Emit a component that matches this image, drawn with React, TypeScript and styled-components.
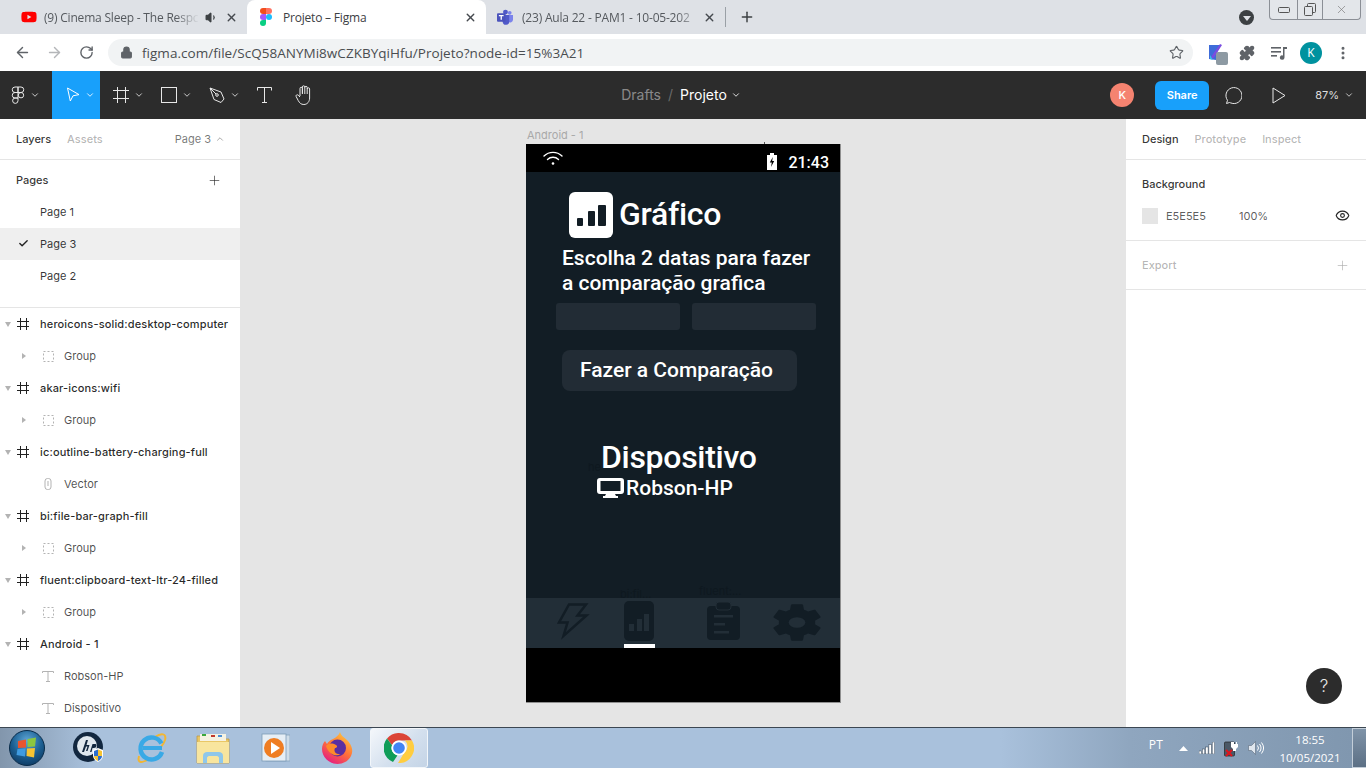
import React, { FC } from 'react';
import styled, { createGlobalStyle } from 'styled-components';
import { FaYoutube } from 'react-icons/fa';
import { ArrowLeft, ArrowRight, RotateCw, Lock, Star, Puzzle, Plus, X, Volume1, ChevronDown, ChevronUp, MoreVertical, Check, Eye } from 'lucide-react';

const GlobalStyle = createGlobalStyle`
  html, body { margin: 0; padding: 0; height: 100%; overflow: hidden; background: #fff; }
  #root { height: 100%; }
  * { box-sizing: border-box; }
`;

const Page = styled.div`
  width: 1366px;
  height: 768px;
  display: flex;
  flex-direction: column;
  position: relative;
  overflow: hidden;
  font-family: Inter, "Liberation Sans", sans-serif;
`;

/* ---------- browser chrome ---------- */

const TabStrip = styled.div`
  height: 34px;
  flex: none;
  display: flex;
  align-items: flex-end;
  background: #dee1e6;
  padding-left: 8px;
  position: relative;
`;

const Tab = styled.div<{ $w: number; $active?: boolean }>`
  width: ${(p) => p.$w}px;
  height: 34px;
  flex: none;
  display: flex;
  align-items: center;
  padding: 0 9px 0 13px;
  background: ${(p) => (p.$active ? '#fff' : 'transparent')};
  border-radius: 8px 8px 0 0;
  color: #45494e;
  font: 12px "Open Sans", "Liberation Sans", sans-serif;
`;

const Favicon = styled.span<{ $shift?: number }>`
  width: 16px;
  flex: none;
  display: flex;
  line-height: 0;
  margin-left: ${(p) => p.$shift ?? 0}px;
  margin-right: ${(p) => -(p.$shift ?? 0)}px;
`;

const TabTitle = styled.span<{ $mute?: boolean; $fade?: boolean }>`
  flex: 1;
  margin-left: 7px;
  white-space: nowrap;
  overflow: hidden;
  letter-spacing: -0.2px;
  color: ${(p) => (p.$mute ? '#55595e' : '#3c4043')};
  ${(p) => (p.$fade ? 'mask-image: linear-gradient(90deg, #000 85%, transparent 100%);' : '')}
`;

const TabAudio = styled(Volume1)`
  margin: 0 7px 0 6px;
  flex: none;
`;

const TabSep = styled.div`
  width: 1px;
  height: 20px;
  background: #9aa0a6;
  margin: 0 0 7px 0;
`;

const NewTab = styled.div`
  width: 42px;
  height: 34px;
  display: flex;
  align-items: center;
  justify-content: center;
  color: #3c4043;
`;

const Spacer = styled.div`
  flex: 1;
`;

const ProfileDot = styled.div`
  width: 15px;
  height: 15px;
  border-radius: 50%;
  background: #3c4043;
  margin: 0 15px 9px 0;
  display: flex;
  align-items: center;
  justify-content: center;
  &::after {
    content: '';
    border: 4px solid transparent;
    border-top: 5px solid #dee1e6;
    margin-top: 5px;
  }
`;

const WinButtons = styled.div`
  align-self: flex-start;
  width: 92px;
  height: 20px;
  margin-right: 5px;
  border: 1px solid #8b8f96;
  border-top: none;
  border-radius: 0 0 4px 4px;
  display: grid;
  grid-template-columns: 27px 25px 1fr;
  background: #e3e6ea;
`;

const WinBtn = styled.div`
  display: flex;
  align-items: center;
  justify-content: center;
  border-left: 1px solid #8b8f96;
  &:first-child {
    border-left: none;
  }
`;

const AddressBar = styled.div`
  height: 37px;
  flex: none;
  background: #fff;
  display: flex;
  align-items: center;
  color: #5f6368;
`;

const NavButton = styled.div<{ $w: number; $off?: boolean; $gap?: number }>`
  width: ${(p) => p.$w}px;
  flex: none;
  margin-left: ${(p) => p.$gap ?? 0}px;
  display: flex;
  align-items: center;
  justify-content: center;
  color: ${(p) => (p.$off ? '#b4b6b9' : '#5f6368')};
`;

const Omnibox = styled.div`
  width: 1085px;
  height: 27px;
  flex: none;
  padding: 0 9px 0 12px;
  border-radius: 14px;
  background: #f1f3f4;
  display: flex;
  align-items: center;
`;

const Url = styled.span`
  flex: 1;
  margin-left: 9px;
  font: 13.5px "Open Sans", "Liberation Sans", sans-serif;
  letter-spacing: 0.03px;
  color: #4a4d50;
`;

const ChromeAvatar = styled.div`
  width: 22px;
  height: 22px;
  border-radius: 50%;
  background: #00929f;
  color: #fff;
  display: flex;
  align-items: center;
  justify-content: center;
  font: 12px "Open Sans", sans-serif;
`;

/* ---------- figma toolbar ---------- */

const Toolbar = styled.div`
  height: 48px;
  flex: none;
  background: #2c2c2c;
  display: grid;
  grid-template-columns: 1fr auto 1fr;
  align-items: center;
  color: #fff;
`;

const ToolGroup = styled.div`
  display: flex;
  height: 48px;
`;

const Tool = styled.div<{ $w?: number; $pad?: number; $gap?: number; $active?: boolean }>`
  width: ${(p) => p.$w ?? 48}px;
  height: 48px;
  flex: none;
  display: flex;
  align-items: center;
  justify-content: center;
  gap: 5px;
  margin-left: ${(p) => p.$gap ?? 0}px;
  padding-left: ${(p) => p.$pad ?? 9}px;
  background: ${(p) => (p.$active ? '#18a0fb' : 'transparent')};
  color: #e8e8e8;
`;

const Crumbs = styled.div`
  display: flex;
  align-items: center;
  font-size: 14px;
  line-height: 16px;
  margin: -1px 4px 0 0;
`;

const CrumbFaint = styled.span`
  color: rgba(255, 255, 255, 0.45);
`;

const CrumbSlash = styled.span`
  color: rgba(255, 255, 255, 0.3);
  margin: 0 7px;
  font-size: 14px;
`;

const CrumbName = styled.span`
  color: #fff;
  margin-right: 4px;
`;

const ToolRight = styled.div`
  display: flex;
  align-items: center;
  justify-content: flex-end;
  height: 48px;
  padding-right: 12px;
`;

const UserDot = styled.div`
  width: 24px;
  height: 24px;
  border-radius: 50%;
  background: #f58370;
  color: #fff;
  font-size: 11px;
  font-weight: 500;
  display: flex;
  align-items: center;
  justify-content: center;
  margin-right: 21px;
`;

const ShareButton = styled.div`
  width: 54px;
  height: 29px;
  border-radius: 6px;
  background: #18a0fb;
  color: #fff;
  font-size: 11px;
  font-weight: 600;
  display: flex;
  align-items: center;
  justify-content: center;
  margin-right: 14px;
`;

const IconSlot = styled.div<{ $w: number }>`
  width: ${(p) => p.$w}px;
  display: flex;
  align-items: center;
  justify-content: center;
`;

const Zoom = styled.div`
  display: flex;
  align-items: center;
  gap: 5px;
  font-size: 11px;
  color: rgba(255, 255, 255, 0.85);
`;

/* ---------- main area ---------- */

const Main = styled.div`
  flex: 1;
  display: flex;
  min-height: 0;
`;

const Panel = styled.aside`
  width: 240px;
  flex: none;
  background: #fff;
  overflow: hidden;
  font-size: 11px;
  color: rgba(0, 0, 0, 0.8);
`;

const PanelTabs = styled.div`
  height: 41px;
  display: flex;
  align-items: center;
  padding: 0 16px;
  gap: 16px;
  border-bottom: 1px solid #e5e5e5;
`;

const PanelTab = styled.span<{ $on?: boolean }>`
  font-weight: 500;
  color: ${(p) => (p.$on ? 'rgba(0,0,0,0.8)' : 'rgba(0,0,0,0.3)')};
`;

const PageSwitch = styled.span`
  margin-left: auto;
  display: flex;
  align-items: center;
  gap: 4px;
  color: rgba(0, 0, 0, 0.55);
  margin-right: -1px;
`;

const PagesHead = styled.div`
  height: 36px;
  display: flex;
  align-items: center;
  justify-content: space-between;
  padding: 4px 18px 0 16px;
  font-weight: 500;
`;

const PagesList = styled.div`
  padding-bottom: 15px;
  border-bottom: 1px solid #e5e5e5;
`;

const PageRow = styled.div<{ $on?: boolean }>`
  height: 32px;
  display: flex;
  align-items: center;
  padding-left: 40px;
  position: relative;
  background: ${(p) => (p.$on ? '#efefef' : 'transparent')};
`;

const PageCheck = styled.span`
  position: absolute;
  left: 18px;
  top: 10px;
  line-height: 0;
`;

const LayerRow = styled.div<{ $child?: boolean }>`
  height: 32px;
  display: flex;
  align-items: center;
  white-space: nowrap;
  font-weight: ${(p) => (p.$child ? 400 : 500)};
  letter-spacing: ${(p) => (p.$child ? 0 : 0.15)}px;
  color: ${(p) => (p.$child ? 'rgba(0,0,0,0.7)' : 'rgba(0,0,0,0.85)')};
`;

const Caret = styled.span<{ $dir: 'down' | 'right' | 'none'; $indent?: boolean }>`
  width: 0;
  height: 0;
  flex: none;
  margin-left: ${(p) => (p.$indent ? '22px' : '5px')};
  border-style: solid;
  ${(p) =>
    p.$dir === 'down'
      ? 'border-width: 5px 3.5px 0 3.5px; border-color: #b3b3b3 transparent transparent transparent;'
      : p.$dir === 'right'
      ? 'border-width: 3.5px 0 3.5px 4px; border-color: transparent transparent transparent #b3b3b3;'
      : 'border-width: 0; border-color: transparent; margin-right: 4px;'}
`;

const LayerIcon = styled.span<{ $child?: boolean }>`
  width: 16px;
  height: 16px;
  flex: none;
  display: flex;
  align-items: center;
  justify-content: center;
  margin-left: ${(p) => (p.$child ? '14px' : '4px')};
  margin-right: ${(p) => (p.$child ? '8px' : '9px')};
`;

const Canvas = styled.main`
  flex: 1;
  background: #e5e5e5;
  padding: 9px 0 0 286px;
  min-width: 0;
  overflow: hidden;
`;

const FrameLabel = styled.div`
  height: 16px;
  padding-left: 1px;
  font-size: 11px;
  line-height: 14px;
  color: #a9a9a9;
`;

const Phone = styled.div`
  width: 315px;
  height: 559px;
  background: #000;
  position: relative;
  display: flex;
  flex-direction: column;
  border: 1px solid #8f8f8f;
  border-width: 0 1px 1px 0;
  font-family: Roboto, sans-serif;
  font-weight: 500;
  color: #fff;
`;

const FrameTick = styled.span`
  position: absolute;
  left: 238px;
  top: -2px;
  width: 1px;
  height: 2px;
  background: #555;
`;

const StatusBar = styled.div`
  height: 28px;
  flex: none;
  background: #000;
  display: flex;
  padding: 7px 11px 0 17px;
`;

const StatusBattery = styled.span`
  line-height: 0;
  margin-top: 2px;
`;

const StatusTime = styled.span`
  font-size: 16px;
  line-height: 24px;
  margin-left: 11px;
`;

const Screen = styled.div`
  height: 426px;
  flex: none;
  background: #121d25;
  display: flex;
  flex-direction: column;
`;

const TitleRow = styled.div`
  display: flex;
  align-items: center;
  margin: 20px 0 0 43px;
  gap: 6px;
`;

const Title = styled.h1`
  margin: 0;
  padding-bottom: 2px;
  font-size: 32px;
  font-weight: 500;
  line-height: 44px;
  letter-spacing: -0.3px;
`;

const Lead = styled.p`
  margin: 8px 0 0 36px;
  font-size: 21px;
  line-height: 25px;
`;

const Inputs = styled.div`
  display: flex;
  gap: 12px;
  margin: 7px 0 0 30px;
`;

const DateInput = styled.div`
  width: 124px;
  height: 27px;
  border-radius: 3px;
  background: #222c35;
`;

const CompareButton = styled.div`
  width: 235px;
  height: 41px;
  margin: 20px 0 0 36px;
  padding-left: 18px;
  border-radius: 8px;
  background: #222c35;
  font-size: 21px;
  line-height: 40px;
  white-space: nowrap;
`;

const DeviceTitle = styled.div`
  margin: 46px 0 0 75px;
  font-size: 32px;
  line-height: 40px;
  letter-spacing: -0.3px;
`;

const DeviceRow = styled.div`
  display: flex;
  align-items: center;
  margin: 1px 0 0 71px;
  gap: 2px;
  font-size: 21px;
  line-height: 20px;
  height: 20px;
`;

const GhostLabel = styled.span<{ $x: number; $y: number }>`
  position: absolute;
  left: ${(p) => p.$x}px;
  top: ${(p) => p.$y}px;
  font-family: Inter, sans-serif;
  font-size: 11px;
  font-weight: 400;
  line-height: 12px;
  color: #0e181f;
`;

const BottomNav = styled.nav`
  height: 50px;
  flex: none;
  background: #222e37;
  position: relative;
  display: grid;
  grid-template-columns: 97px 83px 67px 1fr;
`;

const NavItem = styled.div<{ $pad: number; $top: number }>`
  padding-left: ${(p) => p.$pad}px;
  padding-top: ${(p) => p.$top}px;
  line-height: 0;
`;

const NavMarker = styled.div`
  position: absolute;
  left: 98px;
  bottom: 0;
  width: 31px;
  height: 4px;
  background: #fff;
`;

const DesignRow = styled.div`
  height: 49px;
  display: flex;
  align-items: center;
  padding: 0 16px;
`;

const Section = styled.div`
  padding: 0;
  border-bottom: 1px solid #e5e5e5;
`;

const SectionTitle = styled.div<{ $faint?: boolean }>`
  font-weight: 500;
  padding: 0 16px;
  color: ${(p) => (p.$faint ? 'rgba(0,0,0,0.3)' : 'rgba(0,0,0,0.8)')};
`;

const BackgroundBlock = styled.div`
  padding-top: 17px;
`;

const ExportRow = styled.div`
  height: 48px;
  display: flex;
  align-items: center;
  justify-content: space-between;
  padding-right: 16px;
`;

const Swatch = styled.span`
  width: 16px;
  height: 16px;
  background: #e5e5e5;
  margin-right: 8px;
`;

const HexValue = styled.span`
  width: 73px;
  color: rgba(0, 0, 0, 0.65);
`;

const Opacity = styled.span`
  flex: 1;
  color: rgba(0, 0, 0, 0.65);
`;

const HelpButton = styled.div`
  position: absolute;
  left: 1306px;
  top: 668px;
  width: 36px;
  height: 36px;
  border-radius: 50%;
  background: #2c2c2c;
  color: #e8e8e8;
  font-size: 17px;
  font-weight: 300;
  display: flex;
  align-items: center;
  justify-content: center;
`;

/* ---------- windows taskbar ---------- */

const Taskbar = styled.footer`
  height: 41px;
  flex: none;
  display: flex;
  align-items: center;
  border-top: 1px solid #3c4752;
  background: linear-gradient(90deg, #8296ac 0, #a9c1dc 90px, #a9c1dc 1000px, #8fa6bf 1130px, #7f96ae 1366px);
`;

const TaskSlot = styled.div<{ $on?: boolean }>`
  width: 62px;
  height: 40px;
  flex: none;
  display: flex;
  align-items: center;
  justify-content: center;
  line-height: 0;
  ${(p) =>
    p.$on
      ? `width: 58px; margin-left: 2px; border: 1px solid #f2f6fa; border-radius: 3px;
         background: linear-gradient(135deg, #f4f7fb 0, #d4e0ee 55%, #c4d4e6 100%);`
      : ''}
`;

const TaskFirst = styled(TaskSlot)`
  margin-left: -4px;
`;

const Tray = styled.div`
  margin-left: auto;
  display: flex;
  align-items: center;
  height: 40px;
  color: #fff;
  font: 11.5px "Open Sans", "Liberation Sans", sans-serif;
`;

const TrayItem = styled.div<{ $w: number }>`
  width: ${(p) => p.$w}px;
  display: flex;
  align-items: center;
  justify-content: center;
  line-height: 0;
`;

const Lang = styled.span`
  line-height: 16px;
  margin-top: -6px;
  font-size: 12px;
  letter-spacing: 0.3px;
`;

const Clock = styled.div`
  width: 84px;
  text-align: center;
  line-height: 18px;
  padding-top: 1px;
`;

const ShowDesktop = styled.div`
  width: 14px;
  height: 40px;
  border: 1px solid #c3ced9;
  border-right: none;
  background: linear-gradient(180deg, #7f93a8, #5c7085);
`;

/* ---------- icons ---------- */

const FigmaColor = () => (
  <svg width="12" height="18" viewBox="0 0 12 18">
    <path d="M0 3a3 3 0 0 1 3-3h3v6H3a3 3 0 0 1-3-3z" fill="#f24e1e" />
    <path d="M6 0h3a3 3 0 0 1 0 6H6z" fill="#ff7262" />
    <path d="M0 9a3 3 0 0 1 3-3h3v6H3a3 3 0 0 1-3-3z" fill="#a259ff" />
    <circle cx="9" cy="9" r="3" fill="#1abcfe" />
    <path d="M0 15a3 3 0 0 1 3-3h3v3a3 3 0 0 1-6 0z" fill="#0acf83" />
  </svg>
);

const TeamsIcon = () => (
  <svg width="17" height="16" viewBox="0 0 17 16">
    <circle cx="13.5" cy="3.5" r="2" fill="#7b83eb" />
    <circle cx="9" cy="2.8" r="2.6" fill="#5059c9" />
    <path d="M11 6h6v5a3 3 0 0 1-5 2z" fill="#7b83eb" />
    <path d="M5 6h8v6.5a3.5 3.5 0 0 1-7 .5z" fill="#5059c9" />
    <rect x="0" y="4" width="9" height="9" rx="1" fill="#4b53bc" />
    <path d="M2 6h5v1.2H5.2V11H3.8V7.2H2z" fill="#fff" />
  </svg>
);

const FigmaMono = () => (
  <svg width="14" height="18" viewBox="0 0 14 18" fill="none" stroke="#e8e8e8" strokeWidth="1">
    <path d="M7 1H4a2.7 2.7 0 0 0 0 5.5h3zM7 1h3a2.7 2.7 0 0 1 0 5.5H7zM7 6.5H4a2.7 2.7 0 0 0 0 5.5h3z" />
    <circle cx="10" cy="9.2" r="2.7" />
    <path d="M7 12H4a2.7 2.7 0 1 0 3 2.7z" />
  </svg>
);

const MoveIcon = () => (
  <svg width="14" height="16" viewBox="0 0 14 16" fill="none" stroke="#fff" strokeWidth="1">
    <path d="M1.5 1l2.8 13 2.7-5.2 6-1.2z" />
  </svg>
);

const FrameIcon = () => (
  <svg width="16" height="16" viewBox="0 0 16 16" fill="none" stroke="#e8e8e8" strokeWidth="1">
    <path d="M4.5 0v16M12.5 0v16M0 3.5h16M0 11.5h16" />
  </svg>
);

const RectIcon = () => (
  <svg width="16" height="16" viewBox="0 0 16 16" fill="none" stroke="#e8e8e8" strokeWidth="1">
    <rect x="0.5" y="0.5" width="15" height="15" />
  </svg>
);

const PenIcon = () => (
  <svg width="16" height="17" viewBox="0 0 16 17" fill="none" stroke="#e8e8e8" strokeWidth="1">
    <path d="M1 1l11 4 3 7-3 3.5-7-3zM1 1l6 6" />
    <circle cx="8" cy="8" r="1.3" />
  </svg>
);

const TextIcon = () => (
  <svg width="15" height="16" viewBox="0 0 15 16" fill="none" stroke="#e8e8e8" strokeWidth="1">
    <path d="M0.5 3.5V0.5h14v3M7.5 0.5v15M5 15.5h5" />
  </svg>
);

const HandIcon = () => (
  <svg width="19" height="20" viewBox="0 0 19 20" fill="none" stroke="#e8e8e8" strokeWidth="1">
    <path d="M5 11V3.5a1.2 1.2 0 0 1 2.4 0V9m0-.5V2a1.2 1.2 0 0 1 2.4 0v7m0-6.5a1.2 1.2 0 0 1 2.4 0V9m0-5a1.2 1.2 0 0 1 2.4 0v9c0 3.5-2.2 6.5-5.7 6.5-3 0-4.3-1.5-5.7-4L1.2 11.7c-.8-1.5 1-2.6 2-1.5L5 12" />
  </svg>
);

const CommentIcon = () => (
  <svg width="18" height="19" viewBox="0 0 18 19" fill="none" stroke="#e8e8e8" strokeWidth="1">
    <path d="M2.5 17.5l1-3.2A8 8 0 1 1 7 17a8 8 0 0 1-1.5-.5z" />
  </svg>
);

const PlayIcon = () => (
  <svg width="14" height="17" viewBox="0 0 14 17" fill="none" stroke="#e8e8e8" strokeWidth="1">
    <path d="M1 1l12 7.5L1 16z" />
  </svg>
);

const ExtIcon = () => (
  <svg width="22" height="24" viewBox="0 0 22 24">
    <path d="M3 4h11l-2 3-2 12-7-1z" fill="#3e6cd9" />
    <path d="M5 16l9-13 2 1-9 14z" fill="#7a4de0" />
    <path d="M4 14l3 5-3-1z" fill="#35c0e8" />
    <rect x="10" y="11" width="12" height="13" rx="2" fill="#8d9aa3" />
  </svg>
);

const QueueIcon = () => (
  <svg width="16" height="14" viewBox="0 0 16 14" fill="#5f6368">
    <rect x="0" y="1" width="10" height="1.6" />
    <rect x="0" y="5" width="10" height="1.6" />
    <rect x="0" y="9" width="6" height="1.6" />
    <path d="M12 1h4v2h-2.5v8.5a2.3 2.3 0 1 1-1.5-2.1z" />
  </svg>
);

const MiniFrame = () => (
  <svg width="12" height="12" viewBox="0 0 12 12" fill="none" stroke="#222" strokeWidth="1">
    <path d="M3.5 0v12M9.5 0v12M0 3.5h12M0 8.5h12" />
  </svg>
);

const GroupGlyph = () => (
  <svg width="11" height="11" viewBox="0 0 11 11" fill="none" stroke="#b3b3b3" strokeWidth="1" strokeDasharray="2 2">
    <rect x="0.5" y="0.5" width="10" height="10" />
  </svg>
);

const VectorGlyph = () => (
  <svg width="8" height="12" viewBox="0 0 8 12" fill="none" stroke="#b3b3b3" strokeWidth="1">
    <rect x="1" y="0.5" width="6" height="11" rx="2.5" />
    <path d="M4 3v5" />
  </svg>
);

const TextGlyph = () => (
  <svg width="12" height="11" viewBox="0 0 12 11" fill="none" stroke="#b3b3b3" strokeWidth="1">
    <path d="M0.5 2V0.5h11V2M6 0.5v10M4 10.5h4" />
  </svg>
);

const WifiIcon = () => (
  <svg width="20" height="15" viewBox="0 0 20 15" fill="none" stroke="#fff" strokeWidth="1.4" strokeLinecap="round">
    <path d="M1 5a13 13 0 0 1 18 0M4.5 8.5a8 8 0 0 1 11 0" />
    <circle cx="10" cy="12.5" r="1.3" fill="#fff" stroke="none" />
  </svg>
);

const BatteryIcon = () => (
  <svg width="10" height="17" viewBox="0 0 10 17">
    <path d="M3 0h4v2h3v15H0V2h3z" fill="#fff" />
    <path d="M5.8 4L2.8 9.5h2L4 14l3.2-6h-2z" fill="#000" />
  </svg>
);

const ChartLogo = () => (
  <svg width="44" height="46" viewBox="0 0 44 46">
    <rect width="44" height="46" rx="6" fill="#fff" />
    <rect x="8" y="26" width="6" height="8" rx="1" fill="#121d25" />
    <rect x="19" y="19" width="7" height="15" rx="1" fill="#121d25" />
    <rect x="29" y="13" width="8" height="21" rx="1" fill="#121d25" />
  </svg>
);

const DesktopIcon = () => (
  <svg width="27" height="20" viewBox="0 0 27 20">
    <path fillRule="evenodd" d="M3 0h21a3 3 0 0 1 3 3v10a3 3 0 0 1-3 3H3a3 3 0 0 1-3-3V3a3 3 0 0 1 3-3zm.5 3v10h20V3z" fill="#fff" />
    <path d="M9 16h9l1 2h2v2H6v-2h2z" fill="#fff" />
  </svg>
);

const BoltNav = () => (
  <svg width="34" height="38" viewBox="0 0 34 38" fill="none" stroke="#121d25" strokeWidth="2.5" strokeLinejoin="miter">
    <path d="M13 1.5h17L21.5 12.5h9L7.5 33 11.5 19.5H3z" />
  </svg>
);

const ChartNav = () => (
  <svg width="30" height="40" viewBox="0 0 30 40">
    <rect width="30" height="40" rx="5" fill="#121d25" />
    <rect x="5" y="23" width="5" height="7" fill="#222e37" />
    <rect x="13" y="18" width="5" height="12" fill="#222e37" />
    <rect x="20" y="13" width="5" height="17" fill="#222e37" />
  </svg>
);

const ClipNav = () => (
  <svg width="33" height="38" viewBox="0 0 33 38">
    <rect y="4" width="33" height="34" rx="4" fill="#121d25" />
    <rect x="9" y="0" width="15" height="8" rx="3" fill="#121d25" stroke="#222e37" strokeWidth="1" />
    <rect x="7" y="13" width="19" height="2.5" fill="#222e37" />
    <rect x="7" y="21" width="11" height="2.5" fill="#222e37" />
    <rect x="7" y="29" width="15" height="2.5" fill="#222e37" />
  </svg>
);

const GearNav = () => (
  <svg width="48" height="37" viewBox="2.5 2.3 19 19.4" preserveAspectRatio="none">
    <path
      fill="#121d25"
      d="M19.14 12.94c.04-.3.06-.61.06-.94 0-.32-.02-.64-.07-.94l2.03-1.58c.18-.14.23-.41.12-.61l-1.92-3.32c-.12-.22-.37-.29-.59-.22l-2.39.96c-.5-.38-1.03-.7-1.62-.94l-.36-2.54c-.04-.24-.24-.41-.48-.41h-3.84c-.24 0-.43.17-.47.41l-.36 2.54c-.59.24-1.13.57-1.62.94l-2.39-.96c-.22-.08-.47 0-.59.22L2.74 8.87c-.12.21-.08.47.12.61l2.03 1.58c-.05.3-.09.63-.09.94s.02.64.07.94l-2.03 1.58c-.18.14-.23.41-.12.61l1.92 3.32c.12.22.37.29.59.22l2.39-.96c.5.38 1.03.7 1.62.94l.36 2.54c.05.24.24.41.48.41h3.84c.24 0 .44-.17.47-.41l.36-2.54c.59-.24 1.13-.56 1.62-.94l2.39.96c.22.08.47 0 .59-.22l1.92-3.32c.12-.22.07-.47-.12-.61l-2.01-1.58z"
    />
    <ellipse cx="12" cy="12" rx="3.3" ry="2.7" fill="#222e37" />
  </svg>
);

const StartOrb = () => (
  <svg width="36" height="36" viewBox="0 0 36 36">
    <defs>
      <radialGradient id="orb" cx="50%" cy="30%" r="70%">
        <stop offset="0" stopColor="#5fa8d8" />
        <stop offset="0.6" stopColor="#1c5f92" />
        <stop offset="1" stopColor="#0f3d66" />
      </radialGradient>
    </defs>
    <circle cx="18" cy="18" r="17.5" fill="url(#orb)" stroke="#0a2c4a" />
    <path d="M9 11l8-1.5v8l-8 .5z" fill="#e8552f" />
    <path d="M18.5 9l8.5-1.5-1 9-7.5 .5z" fill="#8cc63f" />
    <path d="M8.5 19l8-.5-.5 8-8.5-1.5z" fill="#3f9be0" />
    <path d="M18 18.5l8-.5-1 9.5-7.5-1.5z" fill="#f6c332" />
  </svg>
);

const HpIcon = () => (
  <svg width="32" height="32" viewBox="0 0 32 32">
    <circle cx="15" cy="15" r="15" fill="#12273f" />
    <circle cx="14" cy="14" r="10" fill="#dfe7ee" />
    <path d="M9 20l4-12h2l-1.5 5h3l-2 6h-1.5l1.5-4.5h-1.5L11 20zM17 20l2.5-8h3c1.5 0 1.5 4-1.5 4h-1.5l-1 4z" fill="#12273f" />
    <path d="M20 18l5-2 5 2v5c0 4-3 6-5 7-2-1-5-3-5-7z" fill="#fff" />
    <path d="M21 19l4-1.5V24h-4zM25 24h4c0 2.5-2 4-4 5z" fill="#2d6fd0" />
    <path d="M25 17.5l4 1.5v5h-4zM21 24h4v5c-2-1-4-2.5-4-5z" fill="#f6c332" />
  </svg>
);

const IeIcon = () => (
  <svg width="32" height="32" viewBox="0 0 32 32" fill="none">
    <path d="M4 24C2 32 7 31 14 27M20 5c6-4 12-4 10 3-.8 2.5-2 4.5-4 7" stroke="#f2b632" strokeWidth="2" />
    <path d="M27 20a11 11 0 1 1-.6-8.5" stroke="#39a9e6" strokeWidth="4.5" />
    <path d="M8 16h19" stroke="#39a9e6" strokeWidth="4" />
  </svg>
);

const FolderIcon = () => (
  <svg width="34" height="31" viewBox="0 0 34 31">
    <path d="M1 3h12l2 3h18v24H1z" fill="#e9c766" stroke="#bd9a47" strokeWidth="0.8" />
    <rect x="4" y="1" width="26" height="7" fill="#f6f2e2" />
    <rect x="6" y="1" width="4" height="2" fill="#3ca83c" />
    <rect x="15" y="2" width="4" height="2" fill="#c1392b" />
    <rect x="22" y="2" width="4" height="2" fill="#4a90d9" />
    <path d="M1 9h32v21H1z" fill="#f8e59e" />
    <path d="M7 23c0-3 2-4 4-4h12c2 0 4 1 4 4v7h-4v-5c0-1-1-2-2-2h-8c-1 0-2 1-2 2v5H7z" fill="#8fc7ea" />
  </svg>
);

const MediaIcon = () => (
  <svg width="30" height="30" viewBox="0 0 30 30">
    <rect x="6" y="2" width="24" height="26" fill="#cfdde9" stroke="#88a5bd" strokeWidth="0.8" />
    <rect x="2" y="1" width="24" height="27" fill="#e6eef5" stroke="#7d9cb6" strokeWidth="0.8" />
    <circle cx="14" cy="15" r="10" fill="#ef7d22" />
    <path d="M11 9l9 6-9 6z" fill="#fff" />
  </svg>
);

const FirefoxIcon = () => (
  <svg width="31" height="32" viewBox="0 0 31 32">
    <defs>
      <linearGradient id="ffx" x1="0.8" y1="0" x2="0.2" y2="1">
        <stop offset="0" stopColor="#ffcb3d" />
        <stop offset="0.5" stopColor="#ff7139" />
        <stop offset="1" stopColor="#e31587" />
      </linearGradient>
    </defs>
    <path d="M18 0c1 4 4 5 7 8 4 4 6 9 5 13-1.5 7-8 11-14.5 11C7 32 0 25 0 17c0-3 1-6 3-8l2 3c1-2 3-4 6-5 3-1.5 6-4 7-7z" fill="url(#ffx)" />
    <circle cx="15.5" cy="16" r="8.5" fill="#5a2fa0" />
    <path d="M4 14c3-3 6-3 10-1 2 1 1 3-1 3-2 4 2 7 6 6-5 3-12 1-15-8z" fill="#ff8a2a" />
  </svg>
);

const ChromeIcon = () => (
  <svg width="30" height="30" viewBox="0 0 30 30">
    <path d="M15 0a15 15 0 0 1 13 7.5H15a7.5 7.5 0 0 0-7 4.8L3 5.5A15 15 0 0 1 15 0z" fill="#db4437" />
    <path d="M3 5.5l5 6.8a7.5 7.5 0 0 0 5.4 10.1L9 29A15 15 0 0 1 3 5.5z" fill="#0f9d58" />
    <path d="M28 7.5A15 15 0 0 1 14 30l6.5-10.7a7.5 7.5 0 0 0 .3-11.8z" fill="#ffcd40" />
    <circle cx="15" cy="15" r="7.5" fill="#fff" />
    <circle cx="15" cy="15" r="5.8" fill="#4285f4" />
  </svg>
);

const SignalIcon = () => (
  <svg width="16" height="12" viewBox="0 0 16 12" fill="#fff" stroke="#39485a" strokeWidth="0.5">
    <rect x="0" y="9" width="2.5" height="3" />
    <rect x="3.3" y="7" width="2.5" height="5" />
    <rect x="6.6" y="5" width="2.5" height="7" />
    <rect x="9.9" y="2.5" width="2.5" height="9.5" />
    <rect x="13.2" y="0" width="2.5" height="12" />
  </svg>
);

const PowerTray = () => (
  <svg width="15" height="17" viewBox="0 0 15 17">
    <rect x="0.5" y="2" width="10" height="14" rx="1" fill="#4b5866" stroke="#222" strokeWidth="0.7" />
    <path d="M7 2h3v2h2V2h1v2h1v3l-2 2v2H9V9L7 7z" fill="#fff" />
    <path d="M2 10l6 6M8 10l-6 6" stroke="#e0141c" strokeWidth="2" />
  </svg>
);

const SpeakerTray = () => (
  <svg width="16" height="14" viewBox="0 0 16 14" fill="none" stroke="#fff" strokeWidth="1">
    <path d="M0.5 4.5h3l4-4v13l-4-4h-3z" fill="#dfe6ee" stroke="#5a6a7a" strokeWidth="0.6" />
    <path d="M9.5 4.5a4 4 0 0 1 0 5M11.5 3a6.5 6.5 0 0 1 0 8M13.5 1.5a9 9 0 0 1 0 11" />
  </svg>
);

/* ---------- data ---------- */

type Layer = { name: string; child?: 'group' | 'vector' | 'text' };

const layers: Layer[] = [
  { name: 'heroicons-solid:desktop-computer' },
  { name: 'Group', child: 'group' },
  { name: 'akar-icons:wifi' },
  { name: 'Group', child: 'group' },
  { name: 'ic:outline-battery-charging-full' },
  { name: 'Vector', child: 'vector' },
  { name: 'bi:file-bar-graph-fill' },
  { name: 'Group', child: 'group' },
  { name: 'fluent:clipboard-text-ltr-24-filled' },
  { name: 'Group', child: 'group' },
  { name: 'Android - 1' },
  { name: 'Robson-HP', child: 'text' },
  { name: 'Dispositivo', child: 'text' },
];

const LayerItem: FC<Layer> = ({ name, child }) => {
  if (!child) {
    return (
      <LayerRow>
        <Caret $dir="down" />
        <LayerIcon>
          <MiniFrame />
        </LayerIcon>
        {name}
      </LayerRow>
    );
  }
  return (
    <LayerRow $child>
      <Caret $dir={child === 'group' ? 'right' : 'none'} $indent />
      <LayerIcon $child>
        {child === 'group' && <GroupGlyph />}
        {child === 'vector' && <VectorGlyph />}
        {child === 'text' && <TextGlyph />}
      </LayerIcon>
      {name}
    </LayerRow>
  );
};

const BrowserChrome = () => (
  <>
    <TabStrip>
      <Tab $w={239}>
        <Favicon>
          <FaYoutube size={16} color="#f00" />
        </Favicon>
        <TabTitle $mute $fade>(9) Cinema Sleep - The Respc</TabTitle>
        <TabAudio size={13} color="#3c4043" fill="#3c4043" />
        <X size={13} strokeWidth={2.5} />
      </Tab>
      <Tab $w={239} $active>
        <Favicon>
          <FigmaColor />
        </Favicon>
        <TabTitle>Projeto – Figma</TabTitle>
        <X size={13} strokeWidth={2.5} />
      </Tab>
      <Tab $w={239}>
        <Favicon $shift={-2}>
          <TeamsIcon />
        </Favicon>
        <TabTitle $mute $fade>(23) Aula 22 - PAM1 - 10-05-202</TabTitle>
        <X size={13} strokeWidth={2.5} />
      </Tab>
      <TabSep />
      <NewTab>
        <Plus size={16} strokeWidth={2.2} />
      </NewTab>
      <Spacer />
      <ProfileDot />
      <WinButtons>
        <WinBtn>
          <svg width="12" height="6" viewBox="0 0 12 6" fill="none" stroke="#555">
            <rect x="0.5" y="0.5" width="11" height="5" rx="1" />
          </svg>
        </WinBtn>
        <WinBtn>
          <svg width="12" height="13" viewBox="0 0 12 13" fill="none" stroke="#555">
            <rect x="3.5" y="0.5" width="8" height="9" rx="1" />
            <rect x="0.5" y="3.5" width="8" height="9" rx="1" fill="#e3e6ea" />
          </svg>
        </WinBtn>
        <WinBtn>
          <X size={13} color="#777" strokeWidth={1.2} />
        </WinBtn>
      </WinButtons>
    </TabStrip>
    <AddressBar>
      <NavButton $w={44}>
        <ArrowLeft size={17} strokeWidth={2} />
      </NavButton>
      <NavButton $w={20} $off>
        <ArrowRight size={17} strokeWidth={2} />
      </NavButton>
      <NavButton $w={44}>
        <RotateCw size={15} strokeWidth={2.2} />
      </NavButton>
      <Omnibox>
        <Lock size={13} fill="#5f6368" />
        <Url>figma.com/file/ScQ58ANYMi8wCZKBYqiHfu/Projeto?node-id=15%3A21</Url>
        <Star size={15} strokeWidth={1.8} color="#5f6368" />
      </Omnibox>
      <NavButton $w={24} $gap={12}>
        <ExtIcon />
      </NavButton>
      <NavButton $w={36}>
        <Puzzle size={16} fill="#5f6368" />
      </NavButton>
      <NavButton $w={28}>
        <QueueIcon />
      </NavButton>
      <NavButton $w={36}>
        <ChromeAvatar>K</ChromeAvatar>
      </NavButton>
      <NavButton $w={28}>
        <MoreVertical size={16} strokeWidth={2.5} />
      </NavButton>
    </AddressBar>
  </>
);

const FigmaToolbar = () => (
  <Toolbar>
    <ToolGroup>
      <Tool $w={50} $pad={0}>
        <FigmaMono />
        <ChevronDown size={10} />
      </Tool>
      <Tool $active $gap={2}>
        <MoveIcon />
        <ChevronDown size={10} color="#fff" />
      </Tool>
      <Tool>
        <FrameIcon />
        <ChevronDown size={10} />
      </Tool>
      <Tool>
        <RectIcon />
        <ChevronDown size={10} />
      </Tool>
      <Tool>
        <PenIcon />
        <ChevronDown size={10} />
      </Tool>
      <Tool $w={40} $pad={0}>
        <TextIcon />
      </Tool>
      <Tool $w={40} $pad={0}>
        <HandIcon />
      </Tool>
    </ToolGroup>
    <Crumbs>
      <CrumbFaint>Drafts</CrumbFaint>
      <CrumbSlash>/</CrumbSlash>
      <CrumbName>Projeto</CrumbName>
      <ChevronDown size={10} />
    </Crumbs>
    <ToolRight>
      <UserDot>K</UserDot>
      <ShareButton>Share</ShareButton>
      <IconSlot $w={20}>
        <CommentIcon />
      </IconSlot>
      <IconSlot $w={72}>
        <PlayIcon />
      </IconSlot>
      <Zoom>
        87%
        <ChevronDown size={10} />
      </Zoom>
    </ToolRight>
  </Toolbar>
);

const LeftPanel = () => (
  <Panel>
    <PanelTabs>
      <PanelTab $on>Layers</PanelTab>
      <PanelTab>Assets</PanelTab>
      <PageSwitch>
        Page 3
        <ChevronUp size={10} color="#999" />
      </PageSwitch>
    </PanelTabs>
    <PagesList>
      <PagesHead>
        Pages
        <Plus size={15} strokeWidth={1} color="#222" />
      </PagesHead>
      <PageRow>Page 1</PageRow>
      <PageRow $on>
        <PageCheck>
          <Check size={11} strokeWidth={3} color="#222" />
        </PageCheck>
        Page 3
      </PageRow>
      <PageRow>Page 2</PageRow>
    </PagesList>
    {layers.map((layer, i) => (
      <LayerItem key={i} {...layer} />
    ))}
  </Panel>
);

const PhoneFrame = () => (
  <Phone>
    <FrameTick />
    <StatusBar>
      <WifiIcon />
      <Spacer />
      <StatusBattery>
        <BatteryIcon />
      </StatusBattery>
      <StatusTime>21:43</StatusTime>
    </StatusBar>
    <Screen>
      <TitleRow>
        <ChartLogo />
        <Title>Gráfico</Title>
      </TitleRow>
      <Lead>
        Escolha 2 datas para fazer
        <br />a comparação grafica
      </Lead>
      <Inputs>
        <DateInput />
        <DateInput />
      </Inputs>
      <CompareButton>Fazer a Comparação</CompareButton>
      <DeviceTitle>Dispositivo</DeviceTitle>
      <DeviceRow>
        <DesktopIcon />
        Robson-HP
      </DeviceRow>
    </Screen>
    <BottomNav>
      <NavItem $pad={30} $top={5}>
        <BoltNav />
      </NavItem>
      <NavItem $pad={1} $top={3}>
        <ChartNav />
      </NavItem>
      <NavItem $pad={1} $top={4}>
        <ClipNav />
      </NavItem>
      <NavItem $pad={0} $top={6}>
        <GearNav />
      </NavItem>
      <NavMarker />
    </BottomNav>
    <GhostLabel $x={94} $y={444}>
      bi:fil...
    </GhostLabel>
    <GhostLabel $x={173} $y={441}>
      fluent:...
    </GhostLabel>
    <GhostLabel $x={62} $y={317}>
      he
    </GhostLabel>
  </Phone>
);

const RightPanel = () => (
  <Panel>
    <PanelTabs>
      <PanelTab $on>Design</PanelTab>
      <PanelTab>Prototype</PanelTab>
      <PanelTab>Inspect</PanelTab>
    </PanelTabs>
    <Section>
      <BackgroundBlock>
        <SectionTitle>Background</SectionTitle>
      </BackgroundBlock>
      <DesignRow>
        <Swatch />
        <HexValue>E5E5E5</HexValue>
        <Opacity>100%</Opacity>
        <Eye size={15} color="#222" strokeWidth={1.8} />
      </DesignRow>
    </Section>
    <Section>
      <ExportRow>
        <SectionTitle $faint>Export</SectionTitle>
        <Plus size={15} strokeWidth={1} color="#aaa" />
      </ExportRow>
    </Section>
  </Panel>
);

const WinTaskbar = () => (
  <Taskbar>
    <TaskFirst>
      <StartOrb />
    </TaskFirst>
    <TaskSlot>
      <HpIcon />
    </TaskSlot>
    <TaskSlot>
      <IeIcon />
    </TaskSlot>
    <TaskSlot>
      <FolderIcon />
    </TaskSlot>
    <TaskSlot>
      <MediaIcon />
    </TaskSlot>
    <TaskSlot>
      <FirefoxIcon />
    </TaskSlot>
    <TaskSlot $on>
      <ChromeIcon />
    </TaskSlot>
    <Tray>
      <TrayItem $w={30}>
        <Lang>PT</Lang>
      </TrayItem>
      <TrayItem $w={24}>
        <svg width="9" height="5" viewBox="0 0 9 5">
          <path d="M4.5 0L9 5H0z" fill="#fff" />
        </svg>
      </TrayItem>
      <TrayItem $w={24}>
        <SignalIcon />
      </TrayItem>
      <TrayItem $w={24}>
        <PowerTray />
      </TrayItem>
      <TrayItem $w={25}>
        <SpeakerTray />
      </TrayItem>
      <Clock>
        18:55
        <br />
        10/05/2021
      </Clock>
      <ShowDesktop />
    </Tray>
  </Taskbar>
);

export default function App() {
  return (
    <Page>
      <GlobalStyle />
      <BrowserChrome />
      <FigmaToolbar />
      <Main>
        <LeftPanel />
        <Canvas>
          <FrameLabel>Android - 1</FrameLabel>
          <PhoneFrame />
        </Canvas>
        <RightPanel />
      </Main>
      <WinTaskbar />
      <HelpButton>?</HelpButton>
    </Page>
  );
}
